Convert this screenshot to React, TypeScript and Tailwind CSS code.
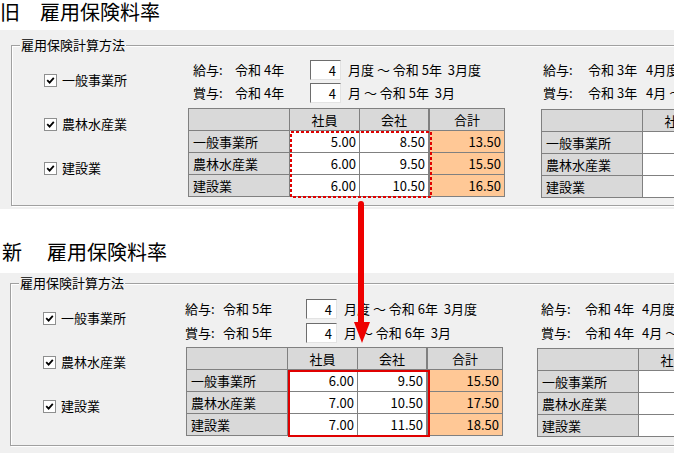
import React from "react";

type Row = { name: string; emp: string; co: string; total: string };

type Layout = {
  panel: string;
  group: string;
  checkCol: string;
  leftPt: string;
  rowGap: string;
  tableGap: string;
  rightTableGap: string;
  textPl: string;
  tableMl: string;
  labelW: string;
  eraW: string;
  rightMl: string;
  rightTextPl: string;
  rLabelW: string;
  rEraW: string;
};

const topLayout: Layout = {
  panel: "h-[179px] pt-[15px]",
  group: "ml-[11px] h-[161px]",
  checkCol: "w-[176px]",
  leftPt: "pt-[14px]",
  rowGap: "mt-[3px]",
  tableGap: "mt-[5px]",
  rightTableGap: "mt-[6px]",
  textPl: "pl-[5px]",
  tableMl: "ml-0",
  labelW: "w-[42px]",
  eraW: "w-[75px]",
  rightMl: "ml-[36px]",
  rightTextPl: "pl-[2px]",
  rLabelW: "w-[45px]",
  rEraW: "w-[58px]",
};

const bottomLayout: Layout = {
  panel: "h-[180px] pt-[10px]",
  group: "ml-[10px] h-[163px]",
  checkCol: "w-[174px]",
  leftPt: "pt-[15px]",
  rowGap: "mt-[4px]",
  tableGap: "mt-[4px]",
  rightTableGap: "mt-[5px]",
  textPl: "pl-0",
  tableMl: "ml-[1px]",
  labelW: "w-[38px]",
  eraW: "w-[83px]",
  rightMl: "ml-[34px]",
  rightTextPl: "pl-[4px]",
  rLabelW: "w-[44px]",
  rEraW: "w-[57px]",
};

const oldRows: Row[] = [
  { name: "一般事業所", emp: "5.00", co: "8.50", total: "13.50" },
  { name: "農林水産業", emp: "6.00", co: "9.50", total: "15.50" },
  { name: "建設業", emp: "6.00", co: "10.50", total: "16.50" },
];

const newRows: Row[] = [
  { name: "一般事業所", emp: "6.00", co: "9.50", total: "15.50" },
  { name: "農林水産業", emp: "7.00", co: "10.50", total: "17.50" },
  { name: "建設業", emp: "7.00", co: "11.50", total: "18.50" },
];

function Check({ label }: { label: string }) {
  return (
    <div className="flex h-[16px] items-center whitespace-nowrap">
      <span className="flex h-[13px] w-[13px] shrink-0 items-center justify-center border border-[#8e8f8f] bg-white">
        <svg width="9" height="9" viewBox="0 0 9 9">
          <path d="M1.2 4.2 L3.6 6.6 L7.8 1.8" stroke="#000" strokeWidth="1.8" fill="none" />
        </svg>
      </span>
      <span className="ml-[5px] leading-[16px]">{label}</span>
    </div>
  );
}

function NumBox({ v }: { v: string }) {
  return (
    <span className="flex h-[20px] w-[31px] shrink-0 items-center justify-end border border-t-[#6d6d6d] border-l-[#6d6d6d] border-r-[#e3e3e3] border-b-[#e3e3e3] bg-white pr-[4px] leading-none">
      {v}
    </span>
  );
}

const cell = "flex h-[22px] shrink-0 items-center whitespace-nowrap border-r border-b border-[#808080]";

function RateTable({
  rows,
  blank,
  mark,
}: {
  rows: Row[];
  blank?: boolean;
  mark?: "dotted" | "solid";
}) {
  return (
    <div className="relative w-max border-l border-t border-[#808080]">
      <div className="flex">
        <div className={`${cell} w-[101px] bg-[#d9d9d9]`} />
        <div className={`${cell} w-[70px] justify-center bg-[#d9d9d9]`}>社員</div>
        <div className={`${cell} w-[70px] justify-center border-r-2 bg-[#d9d9d9]`}>会社</div>
        <div className={`${cell} w-[75px] justify-center bg-[#d9d9d9]`}>合計</div>
      </div>
      {rows.map((r) => (
        <div key={r.name} className="flex">
          <div className={`${cell} w-[101px] bg-[#d9d9d9] pl-[4px]`}>{r.name}</div>
          <div className={`${cell} w-[70px] justify-end bg-white pr-[3px]`}>{blank ? "" : r.emp}</div>
          <div className={`${cell} w-[70px] justify-end border-r-2 bg-white pr-[3px]`}>{blank ? "" : r.co}</div>
          <div className={`${cell} w-[75px] justify-end pr-[3px] ${blank ? "bg-white" : "bg-[#ffc896]"}`}>
            {blank ? "" : r.total}
          </div>
        </div>
      ))}
      {mark === "dotted" && (
        <svg className="pointer-events-none absolute left-[101px] top-[22px]" width="142" height="67">
          <rect x="1" y="1" width="140" height="65" fill="none" stroke="#e00000" strokeWidth="2" strokeDasharray="3 2" />
        </svg>
      )}
      {mark === "solid" && (
        <div className="pointer-events-none absolute left-[101px] top-[22px] h-[67px] w-[142px] border-2 border-[#e00000]" />
      )}
    </div>
  );
}

function DateRow({
  head,
  era,
  rest,
  box,
  L,
  right,
}: {
  head: string;
  era: string;
  rest: string;
  box?: boolean;
  L: Layout;
  right?: boolean;
}) {
  return (
    <div className={`flex h-[20px] items-center whitespace-pre ${right ? L.rightTextPl : L.textPl}`}>
      <span className={`shrink-0 ${right ? L.rLabelW : L.labelW}`}>{head}</span>
      <span className={`shrink-0 ${right ? L.rEraW : L.eraW}`}>{era}</span>
      {box && <NumBox v="4" />}
      <span className={`shrink-0 ${box ? "ml-[7px]" : ""}`}>{rest}</span>
    </div>
  );
}

function Panel({
  L,
  rows,
  year,
  prev,
  mark,
}: {
  L: Layout;
  rows: Row[];
  year: number;
  prev: number;
  mark: "dotted" | "solid";
}) {
  return (
    <div className={`bg-[#f0f0f0] ${L.panel}`}>
      <div
        className={`relative w-[720px] border border-[#a0a0a0] shadow-[1px_1px_0_#fff,inset_1px_1px_0_#fff] ${L.group}`}
      >
        <span className="absolute left-[8px] top-[-9px] whitespace-nowrap bg-[#f0f0f0] px-[1px] leading-[16px]">
          雇用保険計算方法
        </span>
        <div className="flex">
          <div className={`flex shrink-0 flex-col gap-[28px] pl-[32px] pt-[26px] ${L.checkCol}`}>
            <Check label="一般事業所" />
            <Check label="農林水産業" />
            <Check label="建設業" />
          </div>
          <div className={`flex shrink-0 flex-col ${L.leftPt}`}>
            <DateRow L={L} head="給与:" era={`令和 ${year}年`} box rest={`月度 ～ 令和 ${year + 1}年  3月度`} />
            <div className={L.rowGap}>
              <DateRow L={L} head="賞与:" era={`令和 ${year}年`} box rest={`月 ～ 令和 ${year + 1}年  3月`} />
            </div>
            <div className={`${L.tableGap} ${L.tableMl}`}>
              <RateTable rows={rows} mark={mark} />
            </div>
          </div>
          <div className={`flex shrink-0 flex-col ${L.leftPt} ${L.rightMl}`}>
            <DateRow L={L} right head="給与:" era={`令和 ${prev}年`} rest={`4月度 ～ 令和 ${prev + 1}年  3月度`} />
            <div className={L.rowGap}>
              <DateRow L={L} right head="賞与:" era={`令和 ${prev}年`} rest={`4月 ～ 令和 ${prev + 1}年  3月`} />
            </div>
            <div className={L.rightTableGap}>
              <RateTable rows={rows} blank />
            </div>
          </div>
        </div>
      </div>
    </div>
  );
}

export default function App() {
  return (
    <div className="relative h-[453px] w-[674px] overflow-hidden bg-white font-['Noto_Sans_CJK_JP',sans-serif] text-[13px] text-black">
      <div className="h-[30px] whitespace-nowrap text-[20px] leading-[24px]">
        <span>旧</span>
        <span className="ml-[20px]">雇用保険料率</span>
      </div>
      <Panel L={topLayout} rows={oldRows} year={4} prev={3} mark="dotted" />
      <div className="h-[64px] whitespace-nowrap pl-[2px] pt-[31px] text-[20px] leading-[24px]">
        <span>新</span>
        <span className="ml-[25px]">雇用保険料率</span>
      </div>
      <Panel L={bottomLayout} rows={newRows} year={5} prev={4} mark="solid" />

      {/* red arrow linking old rates to new */}
      <svg className="pointer-events-none absolute left-0 top-0" width="674" height="453">
        <line x1="361" y1="204" x2="361" y2="326" stroke="#ee0000" strokeWidth="6" strokeLinecap="round" />
        <polygon points="354,322 370,322 362,343" fill="#ee0000" />
      </svg>
    </div>
  );
}
